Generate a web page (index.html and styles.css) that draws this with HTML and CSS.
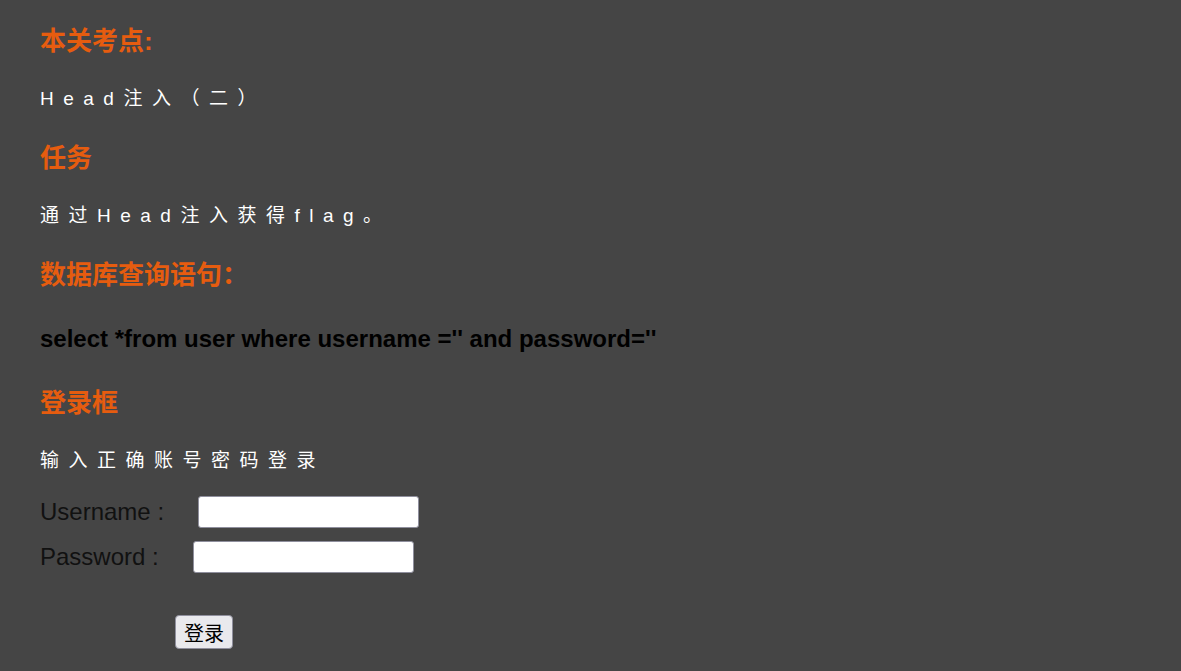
FILE: index.html
```html
<!DOCTYPE html>
<html lang="zh-CN">

<head>
    <meta charset="UTF-8">
    <title>Head注入（二）</title>
    <link rel="stylesheet" href="styles.css">
</head>

<body>
    <div class="main">
        <h2>本关考点:</h2>
        <p class="spaced">Head注入（二）</p>

        <h2>任务</h2>
        <p class="spaced">通过Head注入获得flag。</p>

        <h2>数据库查询语句：</h2>
        <p class="sql">select *from user where username ='' and password=''</p>

        <h2>登录框</h2>
        <p class="spaced">输入正确账号密码登录</p>

        <form class="login" action="#" method="post">
            <div class="row">
                <label for="username">Username :</label>
                <input type="text" id="username" name="username">
            </div>
            <div class="row">
                <label for="password">Password :</label>
                <input type="password" id="password" name="password">
            </div>
            <div class="submit">
                <button type="submit">登录</button>
            </div>
        </form>
    </div>
</body>

</html>
```

FILE: styles.css
```css
body {
    margin: 0;
    background-color: #454545;
    font-family: "Liberation Sans", Arial, "Noto Sans CJK SC", sans-serif;
}

.main {
    padding: 25px 40px 20px;
}

h2 {
    margin: 0 0 28px;
    font-size: 26px;
    line-height: 32px;
    font-weight: bold;
    color: #e65c0f;
    font-family: "Liberation Sans", "Noto Sans CJK SC", sans-serif;
}

p {
    margin: 0 0 29px;
    line-height: 28px;
}

.spaced {
    color: #ffffff;
    font-size: 19px;
    letter-spacing: 9.5px;
}

/* margins collapse with the heading above, so this is the full gap */
.sql {
    margin: 34px 0 34px;
    color: #000000;
    font-size: 24px;
    font-weight: bold;
}

.login {
    font-size: 24px;
    color: #111111;
}

.login .row {
    display: flex;
    align-items: center;
    height: 31px;
    margin-bottom: 14px;
}

.login .row:first-child {
    margin-top: -8px;
}

.login input {
    margin: 0 0 0 34px;
    width: 221px;
    height: 32px;
    box-sizing: border-box;
    border: 1px solid #8f8f9d;
    border-radius: 3px;
    background: #ffffff;
}

.login .submit {
    padding: 29px 0 0 135px;
}

.login button {
    width: 58px;
    height: 34px;
    font-size: 20px;
    font-family: "Noto Sans CJK SC", sans-serif;
    color: #000000;
    background-color: #e9e9ed;
    border: 1px solid #8f8f9d;
    border-radius: 4px;
    padding: 0;
}
```
